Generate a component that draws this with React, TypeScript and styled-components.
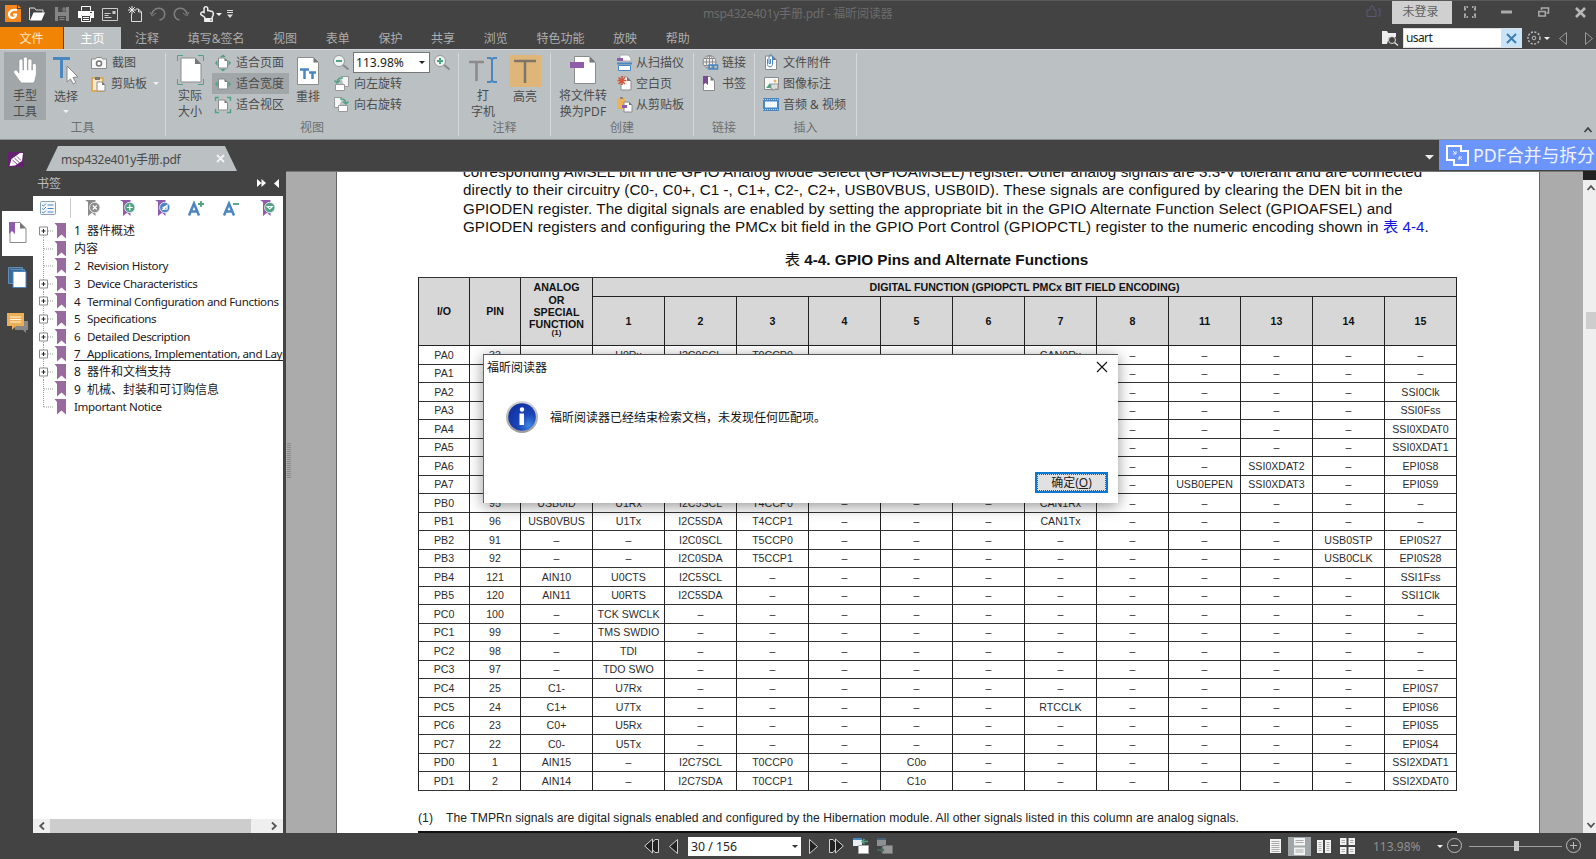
import React from "react";
import styled, { createGlobalStyle, css } from "styled-components";
import { FaHandPaper, FaRegHandPointUp } from "react-icons/fa";

const CJK = '"Noto Sans CJK SC"';
const UI = `"Noto Sans", ${CJK}, sans-serif`;
const DARK = "#434343";

const Global = createGlobalStyle`
  * { box-sizing: border-box; }
  html, body { margin: 0; padding: 0; overflow: hidden; }
  body { background: ${DARK}; font-family: ${UI}; font-size: 12px; }
  svg { display: block; flex: none; overflow: visible; }
`;

const Window = styled.div`
  position: relative;
  width: 1596px;
  height: 859px;
  display: flex;
  flex-direction: column;
  background: ${DARK};
  overflow: hidden;
  white-space: nowrap;
`;

/* Fixed-width slot of a bar; $ml is the gap before it */
const Slot = styled.div<{ $w?: number; $ml?: number; $mt?: number }>`
  flex: none;
  width: ${(p) => (p.$w ? p.$w + "px" : "auto")};
  margin-left: ${(p) => p.$ml ?? 0}px;
  margin-top: ${(p) => p.$mt ?? 0}px;
  display: flex;
  align-items: center;
`;
const Spacer = styled.div`
  flex: 1;
`;
const Caret = styled.i<{ $c?: string; $s?: number; $ml?: number }>`
  flex: none;
  border: ${(p) => p.$s ?? 3}px solid transparent;
  border-top-color: ${(p) => p.$c ?? "#f0f0f0"};
  border-bottom: 0;
  margin-left: ${(p) => p.$ml ?? 0}px;
`;

/* ---------- title bar ---------- */
const TitleBar = styled.div`
  height: 27px;
  display: flex;
  align-items: center;
  border-top: 1px solid #585858;
`;
const Title = styled.div`
  width: 190px;
  margin-left: 470px;
  color: #6c6c6c;
  font-size: 12.1px;
  letter-spacing: -0.27px;
  line-height: 26px;
`;
const Login = styled.div`
  width: 60px;
  height: 23px;
  margin: 0 0 3px 11px;
  background: #d0d0d0;
  color: #606060;
  text-align: center;
  line-height: 22px;
  padding-right: 3px;
`;

/* ---------- ribbon tabs ---------- */
const TabsRow = styled.div`
  height: 22px;
  display: flex;
  color: #adadad;
  line-height: 24px;
`;
const FileTab = styled.div`
  width: 63px;
  background: #f18305;
  color: #ffe6c6;
  text-align: center;
`;
const HomeTab = styled.div`
  width: 57px;
  margin-left: 1px;
  background: #bbc0c3;
  color: #fff;
  text-align: center;
`;
const Menu = styled.div`
  display: flex;
  gap: 28.650px;
  margin-left: 14px;
`;
const Search = styled.div`
  width: 119px;
  height: 20px;
  margin: 1px 0 0 5px;
  background: #fff;
  display: flex;
  color: #222;
  font-size: 12px;
  letter-spacing: -0.6px;
  line-height: 18px;
  border: 1px solid #ddd;
  padding-left: 2px;
`;
const Clear = styled.div`
  width: 20px;
  margin-left: auto;
  background: #c9e4f8;
  display: flex;
  align-items: center;
  justify-content: center;
`;

/* ---------- ribbon ---------- */
const Ribbon = styled.div`
  height: 91px;
  display: flex;
  background: #bbc0c3;
  border-top: 1px solid #d3d6d8;
  border-bottom: 1px solid #8d9193;
  color: #4c4c4c;
  padding-top: 3px;
`;
const Group = styled.div<{ $w: number }>`
  width: ${(p) => p.$w}px;
  height: 83px;
  border-right: 1px solid #d6d9da;
  display: flex;
  flex-direction: column;
`;
const GroupBody = styled.div`
  display: flex;
  height: 68px;
`;
const GroupLabel = styled.div`
  color: #6d7072;
  text-align: center;
  line-height: 16px;
`;
const Big = styled.div<{ $w: number; $ml?: number; $on?: boolean }>`
  width: ${(p) => p.$w}px;
  margin-left: ${(p) => p.$ml ?? 0}px;
  flex: none;
  height: 68px;
  margin-top: -1px;
  display: flex;
  flex-direction: column;
  align-items: center;
  background: ${(p) => (p.$on ? "#a1a6a9" : "transparent")};
  line-height: 16px;
  text-align: center;
`;
const BigIcon = styled.div`
  height: 37px;
  display: flex;
  align-items: center;
  justify-content: center;
`;
const Stack = styled.div<{ $ml?: number; $w: number }>`
  display: flex;
  flex-direction: column;
  flex: none;
  width: ${(p) => p.$w}px;
  margin-left: ${(p) => p.$ml ?? 0}px;
  margin-top: -1px;
`;
const Small = styled.div<{ $on?: boolean; $pl?: number; $gap?: number }>`
  height: 21px;
  display: flex;
  align-items: center;
  gap: ${(p) => p.$gap ?? 5}px;
  padding-left: ${(p) => p.$pl ?? 0}px;
  background: ${(p) => (p.$on ? "#a1a6a9" : "transparent")};
  line-height: 20px;
`;
const ZoomBox = styled.div`
  width: 77px;
  height: 21px;
  border: 1px solid #777;
  background: #fff;
  color: #222;
  display: flex;
  align-items: center;
  justify-content: space-between;
  padding: 0 4px 0 2px;
  font-size: 12.1px;
`;
const HighlightIcon = styled.div`
  width: 32px;
  height: 32px;
  background: #deb679;
  display: flex;
  align-items: center;
  justify-content: center;
`;
const Collapse = styled.div`
  margin: auto 4px 5px auto;
`;

/* ---------- document tabs ---------- */
const DocTabs = styled.div`
  height: 31px;
  display: flex;
  align-items: flex-end;
`;
const DocTab = styled.div`
  width: 191px;
  height: 25px;
  margin-left: 21px;
  padding: 0 13px 0 15px;
  display: flex;
  align-items: center;
  justify-content: space-between;
  background: #bbc0c3;
  clip-path: polygon(12px 0, 179px 0, 191px 100%, 0 100%);
  color: #4a4a4a;
  font-size: 12px;
  letter-spacing: -0.3px;
`;
const Banner = styled.div`
  width: 157px;
  height: 30px;
  margin: 0 0 1px 5px;
  background: #6c95fc;
  color: #eef3ff;
  display: flex;
  align-items: center;
  padding-left: 7px;
  gap: 4px;
  font-size: 17.800px;
  line-height: 30px;
  overflow: hidden;
`;

/* ---------- middle ---------- */
const Middle = styled.div`
  height: 662px;
  display: flex;
`;
const Rail = styled.div`
  width: 33px;
  padding: 40px 0 0 2px;
  display: flex;
  flex-direction: column;
`;
const RailTab = styled.div<{ $on?: boolean; $h: number }>`
  height: ${(p) => p.$h}px;
  display: flex;
  align-items: center;
  justify-content: center;
  padding-bottom: 2px;
  background: ${(p) => (p.$on ? "#fff" : "transparent")};
`;
const Panel = styled.div`
  width: 253px;
  padding-right: 3px;
  display: flex;
  flex-direction: column;
`;
const PanelHead = styled.div`
  height: 25px;
  display: flex;
  align-items: center;
  color: #bdbdbd;
  padding: 0 4px 1px;
  gap: 8px;
`;
const PanelBody = styled.div`
  flex: 1;
  background: #fff;
  overflow: hidden;
  display: flex;
  flex-direction: column;
`;
const PanelTools = styled.div`
  height: 26px;
  display: flex;
  align-items: center;
  padding-bottom: 2px;
`;
const Tree = styled.div`
  flex: 1;
  display: flex;
  flex-direction: column;
`;
const Row = styled.div`
  height: 17.6px;
  display: flex;
  align-items: center;
  padding-left: 6px;
  flex: none;
  color: #1c1822;
  line-height: 17px;
`;
const RowText = styled.span<{ $u?: boolean; $cjk?: boolean }>`
  margin-left: 8px;
  display: flex;
  font-size: ${(p) => (p.$cjk ? 12 : 11.6)}px;
  letter-spacing: ${(p) => (p.$cjk ? 0 : -0.38)}px;
  ${(p) => p.$u && css`border-bottom: 1px solid #222; height: 15px; line-height: 15px; width: 215px;`}
`;
const Num = styled.span`
  width: 13px;
  flex: none;
`;
const HScroll = styled.div`
  height: 14px;
  background: #efefef;
  display: flex;
  align-items: center;
  padding: 0 5px;
  justify-content: space-between;
`;
const HThumb = styled.div`
  width: 201px;
  height: 14px;
  margin: 0 16px 0 0;
  background: #cdcdcd;
`;

const DocArea = styled.div`
  width: 1297px;
  background: #ababab;
  border-top: 1px solid #777;
  display: flex;
  overflow: hidden;
`;
const Grip = styled.div`
  width: 4px;
  height: 36px;
  margin: 271px 45px 0 1px;
  background: repeating-linear-gradient(#8a8a8a 0 1px, #ababab 1px 2px);
`;
const Page = styled.div`
  width: 1204px;
  height: 661px;
  background: #fff;
  border-left: 1px solid #666;
  border-right: 1px solid #666;
  color: #111;
  font-family: "Liberation Sans", ${CJK}, sans-serif;
  overflow: hidden;
  padding-left: 81px;
`;
const Para = styled.div`
  margin: -9px 0 0 45px;
  font-size: 15.200px;
  line-height: 18.4px;
`;
const Line = styled.div<{ $ls?: number }>`
  letter-spacing: ${(p) => p.$ls ?? 0.063}px;
`;
const Link = styled.span`
  color: #1414e0;
`;
const Caption = styled.div`
  width: 1039px;
  margin-top: 13.5px;
  font-size: 15.3px;
  font-weight: bold;
  line-height: 20px;
  text-align: center;
  padding-right: 2px;
`;
const CaptionLabel = styled.span`
  font-weight: normal;
`;
const COLS = "52px 51px repeat(13, 72px)";
const Table = styled.div`
  width: 1039px;
  margin-top: 6.9px;
  border-top: 1px solid #333;
`;
const Head = styled.div`
  display: grid;
  grid-template-columns: ${COLS};
  grid-template-rows: 18.7px 49px;
  background: #d7d7d7;
  font-size: 10.64px;
  font-weight: bold;
  line-height: 12.2px;
  text-align: center;
`;
const Th = styled.div<{ $tall?: boolean; $wide?: boolean; $lift?: boolean }>`
  display: flex;
  flex-direction: column;
  align-items: center;
  justify-content: center;
  border-right: 1px solid #222;
  border-bottom: 1px solid #222;
  ${(p) => p.$tall && css`grid-row: span 2;`}
  ${(p) => p.$wide && css`grid-column: span 12;`}
  ${(p) => p.$lift && css`padding-bottom: 5px;`}
  &:first-child { border-left: 1px solid #222; }
`;
const Sup = styled.small`
  font-size: 8px;
  line-height: 6px;
`;
const Tr = styled.div`
  display: grid;
  grid-template-columns: ${COLS};
  height: 18.52px;
  font-size: 10.64px;
  color: #2c2c2c;
  text-align: center;
  line-height: 18px;
`;
const Td = styled.div`
  border-right: 1px solid #222;
  border-bottom: 1px solid #333;
  &:first-child { border-left: 1px solid #222; }
`;
const Foot = styled.div`
  display: flex;
  margin-top: 18px;
  font-size: 12.160px;
  letter-spacing: 0.045px;
  line-height: 20px;
  color: #222;
`;
const FootNum = styled.span`
  width: 28px;
`;
const Rule = styled.div`
  width: 1039px;
  height: 3px;
  margin-top: 3px;
  background: #111;
`;
const VScroll = styled.div`
  width: 13px;
  background: #efefef;
  border-top: 9px solid #222;
  display: flex;
  flex-direction: column;
  align-items: center;
  padding: 4px 0 4px 3px;
`;
const VThumb = styled.div`
  width: 12px;
  height: 17px;
  margin: 120px 0 auto 1px;
  flex: none;
  background: #cdcdcd;
`;

/* ---------- status bar ---------- */
const Status = styled.div`
  height: 26px;
  display: flex;
  align-items: center;
  color: #909090;
`;
const PageBox = styled.div`
  width: 113px;
  height: 19px;
  margin-left: 10px;
  background: #fff;
  color: #222;
  display: flex;
  align-items: center;
  justify-content: space-between;
  padding: 0 3px 0 3px;
  font-size: 12.3px;
`;
const ViewOn = styled.div`
  width: 23px;
  height: 19px;
  margin-left: 7px;
  background: #a1a6a9;
  display: flex;
  align-items: center;
  justify-content: center;
`;
const Track = styled.div`
  width: 93px;
  height: 1px;
  margin-left: 7px;
  background: #a0a0a0;
  display: flex;
  align-items: center;
`;
const Knob = styled.div`
  width: 5px;
  height: 10px;
  margin-left: 45px;
  background: #c8c8c8;
`;

/* ---------- dialog ---------- */
const Dialog = styled.div`
  position: absolute;
  left: 483px;
  top: 354px;
  width: 635px;
  height: 149px;
  background: #fff;
  border-top: 1px solid #555;
  border-left: 1px solid #666;
  box-shadow: 0 3px 14px rgba(0, 0, 0, 0.42);
  color: #111;
  display: flex;
  flex-direction: column;
`;
const DialogHead = styled.div`
  height: 23px;
  display: flex;
  align-items: center;
  justify-content: space-between;
  padding: 0 11px 0 3px;
`;
const DialogBody = styled.div`
  height: 78px;
  display: flex;
  align-items: center;
  padding-left: 22px;
  gap: 12px;
`;
const DialogButton = styled.button`
  width: 73px;
  height: 21px;
  margin: 16px 10px 0 auto;
  padding: 0;
  border: 2px solid #0c78d2;
  background: #e1e1e1;
  outline: 1px dotted #555;
  outline-offset: -3px;
  color: #222;
  font: 12px/16px ${UI};
`;

/* ---------- drawings ---------- */
type S = { w: number; h?: number; children: React.ReactNode };
const Svg = ({ w, h = w, children }: S) => (
  <svg width={w} height={h} viewBox={`0 0 ${w} ${h}`} fill="none">
    {children}
  </svg>
);
const PURPLE = "#8e5ca8";
const BLUE = "#4a86c0";
const GREEN = "#4fa283";

const Sheet = ({ x = 0, y = 0, w = 11, h = 14, f = 4 }) => (
  <>
    <path d={`M${x} ${y}h${w - f}l${f} ${f}v${h - f}h${-w}z`} fill="#fff" stroke="#8b8b8b" />
    <path d={`M${x + w - f} ${y}v${f}h${f}z`} fill="#777" />
  </>
);
const Logo = () => (
  <Svg w={16} h={17}>
    <path d="M0 0h12v4h4v13H0z" fill="#f6871f" />
    <path d="M13 0l3 3h-3z" fill="#f6871f" />
    <path d="M12 5C7 4 4 6.500 4 9.500s4 4.500 6 2.500c1-1 1-2.500 1-2.500H8" stroke="#fff" strokeWidth="2.200" />
  </Svg>
);
const OpenFolder = () => (
  <Svg w={16} h={14}>
    <path d="M.5 13V1h5l1.500 2h7v3" stroke="#ddd" />
    <path d="M1 13.500L4.500 5.500H16L12.500 13.500z" fill="#fff" />
  </Svg>
);
const Save = () => (
  <Svg w={14}>
    <path d="M0 0h14v14H0z" fill="#858585" />
    <path d="M3 0h8v5H3zM3 9h8v5H3z" fill="#484848" />
    <path d="M8 1h2v3H8zM4.500 10.500h5M4.500 12.500h5" stroke="#858585" />
  </Svg>
);
const Printer = () => (
  <Svg w={16} h={16}>
    <path d="M3.500 4.500v-4h9v4" stroke="#fff" />
    <path d="M0 5h16v7h-3V9H3v3H0z" fill="#fff" />
    <path d="M3.500 9.500h9v6h-9zM5 11.500h6M5 13.500h6" stroke="#fff" />
    <path d="M12 6.500h2" stroke="#444" />
  </Svg>
);
const Mail = () => (
  <Svg w={16} h={13}>
    <path d="M.5.500h15v12H.5zM2.500 5.500h6M2.500 7.500h4M2.500 9.500h7" stroke="#ccc" />
    <path d="M10.500 3h3v3h-3z" fill="#ccc" />
  </Svg>
);
const NewDoc = () => (
  <Svg w={14} h={16}>
    <path d="M3.500 8v7.500h10V6l-3-3H8M10.500 3v3h3" stroke="#ddd" />
    <path d="M4 0v8M0 4h8M1.200 1.200l5.600 5.600M6.800 1.200L1.200 6.800" stroke="#eee" />
  </Svg>
);
const Undo = ({ flip = false }) => (
  <Svg w={16} h={14}>
    <g transform={flip ? "translate(16 0) scale(-1 1)" : undefined}>
      <path d="M2 7C3 2.500 7 .5 10.500 1.500c6 2 5.500 10-1 11.500" stroke="#808080" strokeWidth="1.500" />
      <path d="M0 5l2.200 4L6 6" stroke="#808080" />
    </g>
  </Svg>
);
const Expand = () => (
  <Svg w={12} h={12}>
    <path d="M0 1h4M8 1h4M0 11h4M8 11h4" stroke="#aaa" strokeWidth="2" strokeDasharray="1.500 1" />
    <path d="M1 2v2.500M11 2v2.500M1 7.500V10M11 7.500V10" stroke="#aaa" strokeWidth="2" />
  </Svg>
);
const FolderSearch = () => (
  <Svg w={16} h={15}>
    <path d="M0 13V0h5l1 2h8v4H7L5 13z" fill="#eee" />
    <circle cx="10" cy="9" r="3.500" stroke="#ddd" />
    <path d="M12.500 11.500L16 14.500" stroke="#ddd" strokeWidth="1.500" />
  </Svg>
);
const Triangle = ({ left = false, dark = false, w = 8, h = 13 }) => (
  <Svg w={w} h={h}>
    <path
      d={left ? `M${w - 0.5} .5v${h - 1}L.5 ${h / 2}z` : `M.5 .5v${h - 1}L${w - 0.5} ${h / 2}z`}
      stroke={dark ? "#d0d0d0" : "#999"}
      fill={dark ? "#222" : "none"}
    />
  </Svg>
);
const Jump = ({ left = false }) => (
  <Svg w={15} h={16}>
    <g transform={left ? undefined : "translate(15 0) scale(-1 1)"} stroke="#d0d0d0" fill="#222">
      <path d="M8.500 4.500L11 1.500h3.500v13H11l-2.500-3z" />
      <path d="M8.500 1v14L.7 8z" />
    </g>
  </Svg>
);
const FitPage = ({ kind }: { kind: "page" | "width" | "view" | "actual" }) => {
  if (kind === "actual")
    return (
      <Svg w={27} h={30}>
        <path d="M.5 6V.5H6M21 .5h5.500V6M26.500 24v5.500H21M6 29.500H.5V24" stroke={GREEN} />
        <Sheet x={4} y={3} w={20} h={24} f={6} />
      </Svg>
    );
  return (
    <Svg w={16}>
      {kind === "page" && <path d="M8-.5L11 2H5zM8 16.500L11 14H5zM0 8l2.500-3v6zM16 8l-2.500-3v6z" fill={GREEN} />}
      {kind === "width" && <path d="M0 8l2.500-3v6zM16 8l-2.500-3v6z" fill={GREEN} />}
      {kind === "view" && <path d="M.5 4V.5H4M12 .5h3.500V4M15.500 12v3.500H12M4 15.500H.5V12" stroke={GREEN} strokeWidth="1.400" />}
      <Sheet x={3.5} y={3} w={9} h={10} f={3} />
    </Svg>
  );
};
const Magnify = ({ plus = false }) => (
  <Svg w={16} h={15}>
    <path d="M9.500 9.500l6 5" stroke="#888" strokeWidth="2" />
    <circle cx="6" cy="6" r="5.500" fill="#eef3f1" stroke="#999" />
    <path d={plus ? "M3 6h6M6 3v6" : "M3 6h6"} stroke={GREEN} strokeWidth="2" />
  </Svg>
);
const Rotate = ({ right = false }) => (
  <Svg w={15}>
    <g transform={right ? "translate(15 0) scale(-1 1)" : undefined}>
      <path d="M6.500.500h8v10h-4" fill="#f5f5f5" stroke="#999" />
      <path d="M1.500 8.500h9v6h-9z" fill="#fff" stroke="#999" />
      <path d="M9 2C6 1.500 3.500 3 3 6M.5 4.500L3 7l3-2.500" stroke={GREEN} strokeWidth="1.500" />
    </g>
  </Svg>
);
const Camera = () => (
  <Svg w={16} h={12}>
    <path d="M.5 2h4l1-1.500h5l1 1.500h4v9.500H.5z" fill="#f8f8f8" stroke="#8b8b8b" />
    <circle cx="8" cy="6.500" r="2.500" fill="#fff" stroke="#777" strokeWidth="1.500" />
  </Svg>
);
const Clipboard = () => (
  <Svg w={15} h={16}>
    <path d="M1 2h11v13H1z" fill="#f7e8cf" stroke="#e0a956" strokeWidth="2" />
    <path d="M4 1h5v3H4z" fill="#777" />
    <Sheet x={6} y={6} w={8} h={9} f={3} />
  </Svg>
);
const SelectIcon = () => (
  <Svg w={26} h={28}>
    <path d="M0 1.500h17M8.500 1v20" stroke={BLUE} strokeWidth="3" />
    <path d="M14 9l11 11-5 .5 3 5-3 1.500-2.500-5L14 25z" fill="#fff" stroke="#888" />
  </Svg>
);
const Reflow = () => (
  <Svg w={22} h={28}>
    <Sheet x={0.5} y={0.5} w={21} h={27} f={5} />
    <path d="M3 12.500h9M7.500 12v10M12 15.500h7M15.500 15v7" stroke={BLUE} strokeWidth="2.500" />
  </Svg>
);
const Typewriter = () => (
  <Svg w={28} h={26}>
    <path d="M0 5h15M7.500 5v19" stroke="#8b8b8b" strokeWidth="2.600" />
    <path d="M18 1h3.500l1.500 1.500L24.500 1H28M18 25h3.500l1.500-1.500 1.500 1.500H28M23 2v22" stroke={BLUE} strokeWidth="2" />
  </Svg>
);
const ConvertIcon = () => (
  <Svg w={26} h={28}>
    <Sheet x={4.500} y={0.5} w={21} h={27} f={6} />
    <path d="M0 6h14v6H0z" fill={PURPLE} />
  </Svg>
);
const Scanner = () => (
  <Svg w={15} h={16}>
    <path d="M3 6V0h8l3 3v3z" fill="#fff" stroke="#aaa" />
    <path d="M0 3h6v3H0z" fill={PURPLE} />
    <path d="M0 8.500h15" stroke={BLUE} strokeWidth="2" />
    <path d="M1.500 10.500h12v5h-12z" fill="#fff" stroke={BLUE} />
  </Svg>
);
const Blank = () => (
  <Svg w={15} h={15}>
    <Sheet x={4} y={1} w={10} h={13} />
    <path d="M5 0v9M.5 4.500h9M1.500 1.500l6.500 6.500M8 1.500L1.500 8" stroke="#d8573b" strokeWidth="1.600" />
  </Svg>
);
const FromClip = () => (
  <Svg w={16} h={16}>
    <path d="M0 1h8v11H0z" fill="#eab45f" />
    <path d="M3 0h3v2H3z" fill="#888" />
    <Sheet x={7} y={5} w={8} h={10} f={3} />
    <path d="M5 8h5v3H5z" fill={PURPLE} />
  </Svg>
);
const LinkIcon = () => (
  <Svg w={16} h={16}>
    <circle cx="7.500" cy="7" r="6.500" fill="#eee" stroke="#8b8b8b" />
    <path d="M1 7h13M7.500 .5v13M2 3.500h11M2 10.500h11" stroke="#8b8b8b" />
    <ellipse cx="7.500" cy="7" rx="3.200" ry="6.500" stroke="#8b8b8b" />
    <path d="M7 10h4v4H7zM11.500 10h4v4h-4z" stroke={BLUE} strokeWidth="1.500" />
  </Svg>
);
const MarkIcon = () => (
  <Svg w={12} h={15}>
    <Sheet x={0.5} y={0.5} w={11} h={14} />
    <path d="M0 0h5v9L2.500 7 0 9z" fill="#7b4a96" />
  </Svg>
);
const Attach = () => (
  <Svg w={12} h={15}>
    <Sheet x={0.5} y={1} w={11} h={13.500} />
    <path d="M2.500 4v5.500c0 3 5 3 5 0V2c0-3-3.500-3-3.500 0v6.500h1.500V4" stroke={BLUE} />
  </Svg>
);
const ImageIcon = () => (
  <Svg w={15} h={14}>
    <path d="M.5.500h14v12H.5z" fill="#f7f7f7" stroke="#8b8b8b" />
    <path d="M2 11l4-5 3 5z" fill={GREEN} />
    <circle cx="11" cy="4" r="1.500" fill="#eab45f" />
    <path d="M7 7h7v5h-3l-2 2v-2H7z" fill="#ddd" stroke="#999" />
  </Svg>
);
const Film = () => (
  <Svg w={16} h={13}>
    <path d="M0 0h16v13H0z" fill={BLUE} />
    <path d="M2 3.500h12v6H2z" fill="#f2f8ff" />
    <path d="M0 1.500h16M0 11.500h16" stroke="#b8d2ec" strokeDasharray="1 1" />
  </Svg>
);
const Plume = () => (
  <Svg w={16} h={15}>
    <path d="M0 0h16v15H0z" fill="#65206f" />
    <path d="M1.500 14L3.500 7 12 1l3 0-1 8-7 4.500z" fill="#fff" />
    <path d="M4.500 8l5 4.500M6.500 6.200l5 4.500M9 4.500l4 4" stroke="#65206f" strokeWidth=".8" />
  </Svg>
);
const MergeIcon = () => (
  <Svg w={23} h={21}>
    <path d="M1 1h14v5h7v14H8v-5H1z" stroke="#fff" strokeWidth="2" />
    <path d="M7 6l3 3M10 6v3H7M16 15l-3-3M13 15v-3h3" stroke="#eef" />
  </Svg>
);
const BookTool = ({ c, badge, mark }: { c: string; badge: string; mark: string }) => (
  <Svg w={15} h={16}>
    <path d="M0 0h10.500v16L7 12.800 3 16V2z" fill={c} />
    <circle cx="9.800" cy="7.500" r="5.200" fill={badge} stroke="#fff" strokeWidth=".8" />
    <path d={mark} stroke="#fff" strokeWidth="1.200" />
  </Svg>
);
const LetterSize = ({ minus = false }) => (
  <Svg w={16} h={15}>
    <path d="M1 14.500L6 2.500l5 12M3 10.500h6" stroke={BLUE} strokeWidth="2.500" />
    <path d={minus ? "M10 3h6" : "M10 3h6M13 0v6"} stroke={GREEN} strokeWidth="1.800" />
  </Svg>
);
const ListIcon = () => (
  <Svg w={16} h={14}>
    <rect x=".5" y=".5" width="15" height="13" rx="1" fill="#f4f8fb" stroke="#8aa0b2" />
    <path d="M2 4l1.500 1L6 2.500M2 7.500l1.500 1L6 6M2 11l1.500 1L6 9.500M7.500 4h6M7.500 7.500h6M7.500 11h6" stroke={BLUE} />
  </Svg>
);
const Chevron = ({ d, c = "#555" }: { d: "l" | "r" | "u" | "d"; c?: string }) => {
  const rot = { l: 0, u: 90, r: 180, d: 270 }[d];
  return (
    <Svg w={8}>
      <path d="M6 .5L2.200 4 6 7.500" stroke={c} strokeWidth="1.800" transform={`rotate(${rot} 4 4)`} />
    </Svg>
  );
};
const Node = ({ plus, first, last }: { plus: boolean; first: boolean; last: boolean }) => (
  <Svg w={27} h={17.6}>
    <path
      d={`M4.500 ${first ? 9 : 0}V${last ? 9 : 17.6}M5 9h10`}
      stroke="#9a9a9a"
      strokeDasharray="1 1"
    />
    {plus && <path d="M.5 5h8v8h-8z" fill="#fff" stroke="#8b8b8b" />}
    {plus && <path d="M2.500 9h4M4.500 7v4" stroke="#222" />}
    <path d="M15.500 1H27v15.500l-4.500-4-4.500 4V4z" fill="#996a9e" />
  </Svg>
);
const Cross = ({ s, c, sw }: { s: number; c: string; sw: number }) => (
  <Svg w={s}>
    <path d={`M0 0L${s} ${s}M${s} 0L0 ${s}`} stroke={c} strokeWidth={sw} />
  </Svg>
);
const PageLines = ({ w, h, n = 1, m = 1 }: { w: number; h: number; n?: number; m?: number }) => {
  const cw = (w - (n - 1) * 2) / n;
  const ch = (h - (m - 1) * 2) / m;
  const out = [];
  for (let i = 0; i < n; i++)
    for (let j = 0; j < m; j++) {
      const x = i * (cw + 2);
      const y = j * (ch + 2);
      out.push(<path key={`${i}-${j}`} d={`M${x} ${y}h${cw}v${ch}h${-cw}z`} fill="#f2f2f2" />);
      for (let k = 2.500; k < ch - 1; k += 2)
        out.push(<path key={`${i}-${j}-${k}`} d={`M${x + 1.500} ${y + k}h${cw - 3}`} stroke="#999" strokeWidth=".8" />);
    }
  return <Svg w={w} h={h}>{out}</Svg>;
};
const Round = ({ plus = false }) => (
  <Svg w={15}>
    <circle cx="7.500" cy="7.500" r="7" stroke="#bbb" />
    <path d={plus ? "M4 7.500h7M7.500 4v7" : "M4 7.500h7"} stroke="#bbb" />
  </Svg>
);
const HistoryIcon = ({ off = false }) => (
  <Svg w={16}>
    <g opacity={off ? 0.45 : 1}>
      <path d="M0 1h9v7H0z" fill="#e5edf5" />
      <path d="M0 0h9v2H0z" fill={BLUE} />
      <path d="M5.500 7.500h10v8h-10z" fill="#fff" stroke="#aaa" />
      <path d={off ? "M0 12h6M4 9.500L6.500 12 4 14.500" : "M9 3.500h6M11.500 1L9 3.500 11.500 6"} stroke={GREEN} strokeWidth="1.500" />
    </g>
  </Svg>
);
const Info = () => (
  <Svg w={32}>
    <defs>
      <linearGradient id="infoRing" x1="0" y1="0" x2="0" y2="1">
        <stop offset="0" stopColor="#d5d5d5" />
        <stop offset="1" stopColor="#9b9b9b" />
      </linearGradient>
      <radialGradient id="infoFill" cx=".75" cy=".8" r=".8">
        <stop offset="0" stopColor="#3d86e0" />
        <stop offset=".5" stopColor="#1b45b8" />
        <stop offset="1" stopColor="#1234a4" />
      </radialGradient>
    </defs>
    <circle cx="16" cy="16" r="16" fill="url(#infoRing)" />
    <circle cx="16" cy="16" r="13.800" fill="url(#infoFill)" />
    <circle cx="16" cy="8.500" r="2.200" fill="#fff" />
    <path d="M13.500 12.500h4.500V24h-4.500z" fill="#fff" />
  </Svg>
);

/* ---------- data ---------- */
const MENUS = ["注释", "填写&签名", "视图", "表单", "保护", "共享", "浏览", "特色功能", "放映", "帮助"];

const BOOKMARKS: [string, string, boolean][] = [
  ["1", "器件概述", true],
  ["", "内容", false],
  ["2", "Revision History", false],
  ["3", "Device Characteristics", true],
  ["4", "Terminal Configuration and Functions", true],
  ["5", "Specifications", true],
  ["6", "Detailed Description", true],
  ["7", "Applications, Implementation, and Layout", true],
  ["8", "器件和文档支持", true],
  ["9", "机械、封装和可订购信息", false],
  ["", "Important Notice", false],
];
const isCjk = (t: string) => t.charCodeAt(0) > 0x2e80;

const FUNCS = [1, 2, 3, 4, 5, 6, 7, 8, 11, 13, 14, 15];
type Pin = [string, string, string, Record<number, string>];
const PINS: Pin[] = [
  ["PA0", "33", "–", { 1: "U0Rx", 2: "I2C9SCL", 3: "T0CCP0", 7: "CAN0Rx" }],
  ["PA1", "34", "–", { 1: "U0Tx", 2: "I2C9SDA", 3: "T0CCP1", 7: "CAN0Tx" }],
  ["PA2", "35", "–", { 1: "U4Rx", 2: "I2C8SCL", 3: "T1CCP0", 15: "SSI0Clk" }],
  ["PA3", "36", "–", { 1: "U4Tx", 2: "I2C8SDA", 3: "T1CCP1", 15: "SSI0Fss" }],
  ["PA4", "37", "–", { 1: "U3Rx", 2: "I2C7SCL", 3: "T2CCP0", 15: "SSI0XDAT0" }],
  ["PA5", "38", "–", { 1: "U3Tx", 2: "I2C7SDA", 3: "T2CCP1", 15: "SSI0XDAT1" }],
  ["PA6", "40", "–", { 1: "U2Rx", 2: "I2C6SCL", 3: "T3CCP0", 13: "SSI0XDAT2", 15: "EPI0S8" }],
  ["PA7", "41", "–", { 1: "U2Tx", 2: "I2C6SDA", 3: "T3CCP1", 11: "USB0EPEN", 13: "SSI0XDAT3", 15: "EPI0S9" }],
  ["PB0", "95", "USB0ID", { 1: "U1Rx", 2: "I2C5SCL", 3: "T4CCP0", 7: "CAN1Rx" }],
  ["PB1", "96", "USB0VBUS", { 1: "U1Tx", 2: "I2C5SDA", 3: "T4CCP1", 7: "CAN1Tx" }],
  ["PB2", "91", "–", { 2: "I2C0SCL", 3: "T5CCP0", 14: "USB0STP", 15: "EPI0S27" }],
  ["PB3", "92", "–", { 2: "I2C0SDA", 3: "T5CCP1", 14: "USB0CLK", 15: "EPI0S28" }],
  ["PB4", "121", "AIN10", { 1: "U0CTS", 2: "I2C5SCL", 15: "SSI1Fss" }],
  ["PB5", "120", "AIN11", { 1: "U0RTS", 2: "I2C5SDA", 15: "SSI1Clk" }],
  ["PC0", "100", "–", { 1: "TCK SWCLK" }],
  ["PC1", "99", "–", { 1: "TMS SWDIO" }],
  ["PC2", "98", "–", { 1: "TDI" }],
  ["PC3", "97", "–", { 1: "TDO SWO" }],
  ["PC4", "25", "C1-", { 1: "U7Rx", 15: "EPI0S7" }],
  ["PC5", "24", "C1+", { 1: "U7Tx", 7: "RTCCLK", 15: "EPI0S6" }],
  ["PC6", "23", "C0+", { 1: "U5Rx", 15: "EPI0S5" }],
  ["PC7", "22", "C0-", { 1: "U5Tx", 15: "EPI0S4" }],
  ["PD0", "1", "AIN15", { 2: "I2C7SCL", 3: "T0CCP0", 5: "C0o", 15: "SSI2XDAT1" }],
  ["PD1", "2", "AIN14", { 2: "I2C7SDA", 3: "T0CCP1", 5: "C1o", 15: "SSI2XDAT0" }],
];

/* ---------- sections ---------- */
const TopBar = () => (
  <TitleBar>
    <Slot $w={16} $ml={5} $mt={-1}><Logo /></Slot>
    <Slot $w={16} $ml={8}><OpenFolder /></Slot>
    <Slot $w={14} $ml={10}><Save /></Slot>
    <Slot $w={16} $ml={9}><Printer /></Slot>
    <Slot $w={16} $ml={8}><Mail /></Slot>
    <Slot $w={14} $ml={10}><NewDoc /></Slot>
    <Slot $w={16} $ml={8}><Undo /></Slot>
    <Slot $w={16} $ml={7}><Undo flip /></Slot>
    <Slot $w={14} $ml={10}><FaRegHandPointUp size={16} color="#eee" /></Slot>
    <Caret $ml={3} />
    <Slot $w={6} $ml={5}>
      <Svg w={6} h={8}>
        <path d="M0 .5h6M0 2.500h6" stroke="#ddd" />
        <path d="M0 4.500h6L3 8z" fill="#ddd" />
      </Svg>
    </Slot>
    <Title>msp432e401y手册.pdf - 福昕阅读器</Title>
    <Spacer />
    <Slot $w={15} $mt={-6}>
      <Svg w={15} h={12}>
        <path d="M1 11.500V5h3l1-4h2l1 4h2v6.500zM12 4h2v7h-2" stroke="#595878" />
      </Svg>
    </Slot>
    <Login>未登录</Login>
    <Slot $w={12} $ml={12} $mt={-4}><Expand /></Slot>
    <Slot $w={11} $ml={25} $mt={-4}>
      <Svg w={11} h={4}><path d="M0 2h11" stroke="#aaa" strokeWidth="3" /></Svg>
    </Slot>
    <Slot $w={11} $ml={26} $mt={-4}>
      <Svg w={11} h={10}>
        <path d="M3.500 3V1h7v5h-2" stroke="#aaa" strokeWidth="1.500" />
        <path d="M.8 4.500h6.500v4.500H.8z" stroke="#aaa" strokeWidth="1.500" />
      </Svg>
    </Slot>
    <Slot $w={20} $ml={27} $mt={-4}><Cross s={9} c="#b8b8b8" sw={2.600} /></Slot>
  </TitleBar>
);

const Tabs = () => (
  <TabsRow>
    <FileTab>文件</FileTab>
    <HomeTab>主页</HomeTab>
    <Menu>{MENUS.map((m) => <span key={m}>{m}</span>)}</Menu>
    <Spacer />
    <Slot $w={16}><FolderSearch /></Slot>
    <Search>usart<Clear><Cross s={9} c="#3d7eb0" sw={2} /></Clear></Search>
    <Slot $w={14} $ml={5}>
      <Svg w={14}>
        <circle cx="7" cy="7" r="6" stroke="#bbb" strokeWidth="1.500" strokeDasharray="2 1.500" />
        <circle cx="7" cy="7" r="1.800" stroke="#bbb" />
      </Svg>
    </Slot>
    <Slot $ml={3}><Caret /></Slot>
    <Slot $w={8} $ml={9}><Triangle left /></Slot>
    <Slot $w={11} $ml={18}><Triangle /></Slot>
  </TabsRow>
);

const RibbonBar = () => (
  <Ribbon>
    <Group $w={166}>
      <GroupBody>
        <Big $w={42} $ml={4} $on>
          <BigIcon><FaHandPaper size={26} color="#fff" stroke="#888" strokeWidth={12} /></BigIcon>
          手型<br />工具
        </Big>
        <Big $w={34} $ml={3}>
          <BigIcon><SelectIcon /></BigIcon>
          选择
          <Slot $mt={5}><Caret /></Slot>
        </Big>
        <Stack $ml={8} $w={70}>
          <Small><Camera />截图</Small>
          <Small><Clipboard />剪贴板<Caret $ml={1} /></Small>
        </Stack>
      </GroupBody>
      <GroupLabel>工具</GroupLabel>
    </Group>
    <Group $w={293}>
      <GroupBody>
        <Big $w={40} $ml={4}>
          <BigIcon><FitPage kind="actual" /></BigIcon>
          实际<br />大小
        </Big>
        <Stack $w={77} $ml={2}>
          <Small $pl={3}><FitPage kind="page" />适合页面</Small>
          <Small $pl={3} $on><FitPage kind="width" />适合宽度</Small>
          <Small $pl={3}><FitPage kind="view" />适合视区</Small>
        </Stack>
        <Big $w={36} $ml={1}>
          <BigIcon><Reflow /></BigIcon>
          重排
        </Big>
        <Stack $w={120} $ml={7}>
          <Small $gap={4}><Magnify /><ZoomBox>113.98%<Caret $c="#222" /></ZoomBox><Magnify plus /></Small>
          <Small $pl={1}><Rotate />向左旋转</Small>
          <Small $pl={1}><Rotate right />向右旋转</Small>
        </Stack>
      </GroupBody>
      <GroupLabel>视图</GroupLabel>
    </Group>
    <Group $w={92}>
      <GroupBody>
        <Big $w={40} $ml={4}>
          <BigIcon><Typewriter /></BigIcon>
          打<br />字机
        </Big>
        <Big $w={40} $ml={2}>
          <BigIcon>
            <HighlightIcon>
              <Svg w={22} h={24}><path d="M0 2h22M11 2v22" stroke="#7d7568" strokeWidth="2.500" /></Svg>
            </HighlightIcon>
          </BigIcon>
          高亮
        </Big>
      </GroupBody>
      <GroupLabel>注释</GroupLabel>
    </Group>
    <Group $w={143}>
      <GroupBody>
        <Big $w={54} $ml={5}>
          <BigIcon><ConvertIcon /></BigIcon>
          将文件转<br />换为PDF
        </Big>
        <Stack $w={75} $ml={7}>
          <Small $gap={4}><Scanner />从扫描仪</Small>
          <Small $gap={4}><Blank />空白页</Small>
          <Small $gap={3}><FromClip />从剪贴板</Small>
        </Stack>
      </GroupBody>
      <GroupLabel>创建</GroupLabel>
    </Group>
    <Group $w={61}>
      <GroupBody>
        <Stack $w={50} $ml={8}>
          <Small $gap={4}><LinkIcon />链接</Small>
          <Small $gap={7} $pl={1}><MarkIcon />书签</Small>
        </Stack>
      </GroupBody>
      <GroupLabel>链接</GroupLabel>
    </Group>
    <Group $w={102}>
      <GroupBody>
        <Stack $w={88} $ml={8}>
          <Small $gap={6} $pl={2}><Attach />文件附件</Small>
          <Small $pl={1} $gap={4}><ImageIcon />图像标注</Small>
          <Small $gap={4}><Film />音频 &amp; 视频</Small>
        </Stack>
      </GroupBody>
      <GroupLabel>插入</GroupLabel>
    </Group>
    <Collapse><Chevron d="u" c="#444" /></Collapse>
  </Ribbon>
);

const DocumentTabs = () => (
  <DocTabs>
    <Slot $w={17} $ml={8}><Svg w={16} h={19}><Plume /></Svg></Slot>
    <DocTab>msp432e401y手册.pdf<Cross s={7} c="#f2f2f2" sw={1.800} /></DocTab>
    <Spacer />
    <Slot><Svg w={9} h={18}><path d="M0 2h9L4.500 6.500z" fill="#eee" /></Svg></Slot>
    <Banner><MergeIcon />PDF合并与拆分</Banner>
  </DocTabs>
);

const Bookmarks = () => (
  <Panel>
    <PanelHead>
      书签
      <Spacer />
      <Svg w={9} h={8}><path d="M0 0l4.500 4L0 8zM4.500 0L9 4 4.500 8z" fill="#fff" /></Svg>
      <Svg w={5} h={9}><path d="M5 0v9L0 4.500z" fill="#fff" /></Svg>
    </PanelHead>
    <PanelBody>
      <PanelTools>
        <Slot $w={16} $ml={7}><ListIcon /></Slot>
        <Slot $w={1} $ml={14}><Svg w={1} h={20}><path d="M.5 0v20" stroke="#ccc" /></Svg></Slot>
        <Slot $w={15} $ml={14}><BookTool c="#8b8b8b" badge="#8b8b8b" mark="M7.800 5.500l4 4M11.800 5.500l-4 4" /></Slot>
        <Slot $w={15} $ml={20}><BookTool c={PURPLE} badge={GREEN} mark="M6.800 7.500h6M9.800 4.500v6" /></Slot>
        <Slot $w={15} $ml={20}><BookTool c={PURPLE} badge={BLUE} mark="M8 9.500l4-4v3.500zM12 5.500L7.500 8" /></Slot>
        <Slot $w={16} $ml={18}><LetterSize /></Slot>
        <Slot $w={16} $ml={19}><LetterSize minus /></Slot>
        <Slot $w={15} $ml={21}><BookTool c={PURPLE} badge={GREEN} mark="M7.300 6.500h5l-2.500 2.500z" /></Slot>
      </PanelTools>
      <Tree>
        {BOOKMARKS.map(([n, t, plus], i) => (
          <Row key={t}>
            <Node plus={plus} first={i === 0} last={i === BOOKMARKS.length - 1} />
            <RowText $u={n === "7"} $cjk={isCjk(t)}>{n && <Num>{n}</Num>}{t}</RowText>
          </Row>
        ))}
      </Tree>
      <HScroll><Chevron d="l" /><HThumb /><Chevron d="r" /></HScroll>
    </PanelBody>
  </Panel>
);

const PdfPage = () => (
  <DocArea>
    <Grip />
    <Page>
      <Para>
        <Line>corresponding AMSEL bit in the GPIO Analog Mode Select (GPIOAMSEL) register. Other analog signals are 3.3-V tolerant and are connected</Line>
        <Line>directly to their circuitry (C0-, C0+, C1 -, C1+, C2-, C2+, USB0VBUS, USB0ID). These signals are configured by clearing the DEN bit in the</Line>
        <Line>GPIODEN register. The digital signals are enabled by setting the appropriate bit in the GPIO Alternate Function Select (GPIOAFSEL) and</Line>
        <Line $ls={0.05}>GPIODEN registers and configuring the PMCx bit field in the GPIO Port Control (GPIOPCTL) register to the numeric encoding shown in <Link>表 4-4</Link>.</Line>
      </Para>
      <Caption><CaptionLabel>表</CaptionLabel> 4-4. GPIO Pins and Alternate Functions</Caption>
      <Table>
        <Head>
          <Th $tall>I/O</Th>
          <Th $tall>PIN</Th>
          <Th $tall $lift>ANALOG<br />OR<br />SPECIAL<br />FUNCTION<Sup>(1)</Sup></Th>
          <Th $wide>DIGITAL FUNCTION (GPIOPCTL PMCx BIT FIELD ENCODING)</Th>
          {FUNCS.map((f) => <Th key={f}>{f}</Th>)}
        </Head>
        {PINS.map(([io, pin, analog, fn]) => (
          <Tr key={io}>
            <Td>{io}</Td>
            <Td>{pin}</Td>
            <Td>{analog}</Td>
            {FUNCS.map((f) => <Td key={f}>{fn[f] ?? "–"}</Td>)}
          </Tr>
        ))}
      </Table>
      <Foot>
        <FootNum>(1)</FootNum>
        The TMPRn signals are digital signals enabled and configured by the Hibernation module. All other signals listed in this column are analog signals.
      </Foot>
      <Rule />
    </Page>
  </DocArea>
);

const StatusBar = () => (
  <Status>
    <Slot $w={15} $ml={644}><Jump left /></Slot>
    <Slot $w={9} $ml={10}><Triangle left dark w={9} h={15} /></Slot>
    <PageBox>30 / 156<Caret $c="#333" /></PageBox>
    <Slot $w={9} $ml={8}><Triangle dark w={9} h={15} /></Slot>
    <Slot $w={15} $ml={11}><Jump /></Slot>
    <Slot $w={16} $ml={9}><HistoryIcon /></Slot>
    <Slot $w={16} $ml={8}><HistoryIcon off /></Slot>
    <Spacer />
    <Slot $w={11}><PageLines w={11} h={14} /></Slot>
    <ViewOn><PageLines w={11} h={17} m={2} /></ViewOn>
    <Slot $w={14} $ml={6}><PageLines w={14} h={13} n={2} /></Slot>
    <Slot $w={15} $ml={9}><PageLines w={15} h={16} n={2} m={2} /></Slot>
    <Slot $w={48} $ml={18}>113.98%</Slot>
    <Caret $ml={16} />
    <Slot $w={15} $ml={4} $mt={-2}><Round /></Slot>
    <Track><Knob /></Track>
    <Slot $w={15} $ml={4} $mt={-2}><Round plus /></Slot>
    <Slot $w={15} />
  </Status>
);

export default function App() {
  return (
    <Window>
      <Global />
      <TopBar />
      <Tabs />
      <RibbonBar />
      <DocumentTabs />
      <Middle>
        <Rail>
          <RailTab $on $h={45}>
            <Svg w={18} h={22}>
              <Sheet x={1} y={0.5} w={16} h={20} f={6} />
              <path d="M0 0h6v12L3 9 0 12z" fill={PURPLE} />
            </Svg>
          </RailTab>
          <RailTab $h={45}>
            <Svg w={19} h={21}>
              <path d="M.5.500h14v16H.5zM2.500 2.500h14v16" fill="#3d688f" stroke="#5f8db5" />
              <path d="M5 4.500h13v16H5z" fill="#fff" stroke={BLUE} />
            </Svg>
          </RailTab>
          <RailTab $h={45}>
            <Svg w={22} h={20}>
              <path d="M8 8h13v9h-2v3l-3-3H8z" fill="#888" />
              <path d="M0 0h17v13H9l-4 4v-4H0z" fill="#ecaf57" />
              <path d="M3 4h11M3 6.500h11M3 9h11" stroke="#fff3dc" />
            </Svg>
          </RailTab>
        </Rail>
        <Bookmarks />
        <PdfPage />
        <VScroll><Chevron d="u" /><VThumb /><Chevron d="d" /></VScroll>
      </Middle>
      <StatusBar />
      <Dialog>
        <DialogHead>福昕阅读器<Cross s={10} c="#111" sw={1.100} /></DialogHead>
        <DialogBody><Info />福昕阅读器已经结束检索文档，未发现任何匹配项。</DialogBody>
        <DialogButton>确定(<u>O</u>)</DialogButton>
      </Dialog>
    </Window>
  );
}
